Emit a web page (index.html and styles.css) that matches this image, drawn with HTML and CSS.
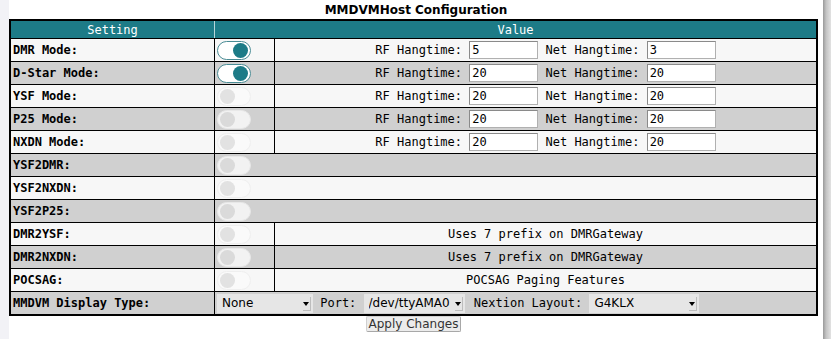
FILE: index.html
```html
<!DOCTYPE html>
<html>
  <head>
    <title>MMDVMHost Configuration</title>
    <link rel="stylesheet" href="styles.css">
  </head>
  <body>
    <div class="page">
      <div class="gutter-left"></div>
      <div class="content">
        <div class="title">MMDVMHost Configuration</div>
        <form>
          <table class="config">
            <tr>
              <th class="col-setting">Setting</th>
              <th colspan="2">Value</th>
            </tr>
            <tr>
              <td class="label">DMR Mode:</td>
              <td class="toggle-cell"><div class="switch on"><span class="knob"></span></div></td>
              <td class="center">RF Hangtime: <input type="text" value="5"> Net Hangtime: <input type="text" value="3"></td>
            </tr>
            <tr>
              <td class="label">D-Star Mode:</td>
              <td class="toggle-cell"><div class="switch on"><span class="knob"></span></div></td>
              <td class="center">RF Hangtime: <input type="text" value="20"> Net Hangtime: <input type="text" value="20"></td>
            </tr>
            <tr>
              <td class="label">YSF Mode:</td>
              <td class="toggle-cell"><div class="switch"><span class="knob"></span></div></td>
              <td class="center">RF Hangtime: <input type="text" value="20"> Net Hangtime: <input type="text" value="20"></td>
            </tr>
            <tr>
              <td class="label">P25 Mode:</td>
              <td class="toggle-cell"><div class="switch"><span class="knob"></span></div></td>
              <td class="center">RF Hangtime: <input type="text" value="20"> Net Hangtime: <input type="text" value="20"></td>
            </tr>
            <tr>
              <td class="label">NXDN Mode:</td>
              <td class="toggle-cell"><div class="switch"><span class="knob"></span></div></td>
              <td class="center">RF Hangtime: <input type="text" value="20"> Net Hangtime: <input type="text" value="20"></td>
            </tr>
            <tr>
              <td class="label">YSF2DMR:</td>
              <td colspan="2"><div class="switch"><span class="knob"></span></div></td>
            </tr>
            <tr>
              <td class="label">YSF2NXDN:</td>
              <td colspan="2"><div class="switch"><span class="knob"></span></div></td>
            </tr>
            <tr>
              <td class="label">YSF2P25:</td>
              <td colspan="2"><div class="switch"><span class="knob"></span></div></td>
            </tr>
            <tr>
              <td class="label">DMR2YSF:</td>
              <td class="toggle-cell"><div class="switch"><span class="knob"></span></div></td>
              <td class="center">Uses 7 prefix on DMRGateway</td>
            </tr>
            <tr>
              <td class="label">DMR2NXDN:</td>
              <td class="toggle-cell"><div class="switch"><span class="knob"></span></div></td>
              <td class="center">Uses 7 prefix on DMRGateway</td>
            </tr>
            <tr>
              <td class="label">POCSAG:</td>
              <td class="toggle-cell"><div class="switch"><span class="knob"></span></div></td>
              <td class="center">POCSAG Paging Features</td>
            </tr>
            <tr>
              <td class="label">MMDVM Display Type:</td>
              <td colspan="2" class="display-cell">
                <span class="select w-none"><select><option>None</option></select></span>
                Port:
                <span class="select w-port"><select><option>/dev/ttyAMA0</option></select></span>
                Nextion Layout:
                <span class="select w-layout"><select><option>G4KLX</option></select></span>
              </td>
            </tr>
          </table>
          <div class="actions">
            <button type="button">Apply Changes</button>
          </div>
        </form>
      </div>
      <div class="gutter-right"></div>
    </div>
  </body>
</html>
```

FILE: styles.css
```css
body {
  margin: 0;
  background: #ffffff;
}
.page {
  display: flex;
  height: 339px;
}
.gutter-left {
  width: 9px;
  background: #f2f2f6;
}
.content {
  width: 814px;
  background: #ffffff;
}
.gutter-right {
  flex: 1;
  background: linear-gradient(to right, #9a9a9a, #c4c4c4 40%, #e2e2e2);
}
.title {
  height: 19px;
  line-height: 21px;
  text-align: center;
  font-family: "DejaVu Sans", sans-serif;
  font-weight: bold;
  font-size: 12px;
  color: #000;
}

.config {
  width: 809px;
  border-collapse: collapse;
  border: 2px solid #000;
  font-family: "DejaVu Sans Mono", monospace;
  font-size: 12px;
  color: #000;
}
.config th {
  height: 17px;
  padding: 0;
  background: #1d7b87;
  color: #ffffff;
  font-weight: normal;
  border-top: 2px solid #000;
  border-bottom: 1px solid #000;
  border-left: 1px solid #b8d6da;
  border-right: 1px solid #b8d6da;
}
.config .col-setting {
  width: 203px;
}
.config td {
  height: 22px;
  padding: 0 2px;
  border: 1px solid #000;
  vertical-align: middle;
  white-space: nowrap;
}
.config tr:nth-child(even) td {
  background: #f7f7f7;
}
.config tr:nth-child(odd) td {
  background: #d0d0d0;
}
.config .label {
  font-weight: bold;
}
.config .toggle-cell {
  width: 55px;
}
.config .center {
  text-align: center;
}

.config input[type="text"] {
  width: 63px;
  height: 14px;
  padding: 1px 2px;
  margin: 0;
  border: 1px solid #b0b0b0;
  border-top-color: #8a8a8a;
  border-left-color: #8a8a8a;
  font-family: "DejaVu Sans Mono", monospace;
  font-size: 12px;
  vertical-align: middle;
}

.switch {
  position: relative;
  width: 32px;
  height: 17px;
  border: 1px solid #eeeeee;
  border-radius: 10px;
  background: #fbfbfb;
  opacity: 0.8;
}
.switch .knob {
  position: absolute;
  top: 1px;
  left: 2px;
  width: 15px;
  height: 15px;
  border-radius: 50%;
  background: #dddddd;
}
.switch.on {
  border: 1px solid #4a8c95;
  background: #ffffff;
  opacity: 1;
}
.switch.on .knob {
  left: 15px;
  background: #1d7b87;
}

.display-cell {
  font-size: 12px;
}
.select {
  position: relative;
  display: inline-block;
  vertical-align: middle;
}
.select select {
  appearance: none;
  -webkit-appearance: none;
  height: 19px;
  padding: 0 5px;
  border: 0;
  border-radius: 0;
  background: #e6e6e6;
  font-family: "DejaVu Sans", sans-serif;
  font-size: 12px;
  color: #000;
}
.select::after {
  content: "";
  position: absolute;
  right: 2px;
  top: 3px;
  width: 7px;
  height: 13px;
  background: #e6e6e6;
  border-right: 1px solid #bdbdbd;
  border-bottom: 1px solid #bdbdbd;
  pointer-events: none;
}
.select::before {
  content: "";
  position: absolute;
  right: 4px;
  top: 8px;
  border-left: 3px solid transparent;
  border-right: 3px solid transparent;
  border-top: 4px solid #000;
  z-index: 1;
  pointer-events: none;
}
.w-none select {
  width: 96px;
}
.w-port {
  margin-right: 2px;
}
.w-port select {
  width: 101px;
}
.w-layout select {
  width: 110px;
}

.actions {
  width: 809px;
  text-align: center;
  padding-top: 0;
  line-height: 16px;
}
.actions button {
  height: 16px;
  padding: 0 2px;
  border: 1px solid #d0d0d0;
  border-right-color: #a8a8a8;
  border-bottom-color: #a8a8a8;
  border-radius: 2px;
  background: #ececec;
  font-family: "DejaVu Sans", sans-serif;
  font-size: 12px;
  line-height: 14px;
  color: #333;
  vertical-align: top;
}
```
